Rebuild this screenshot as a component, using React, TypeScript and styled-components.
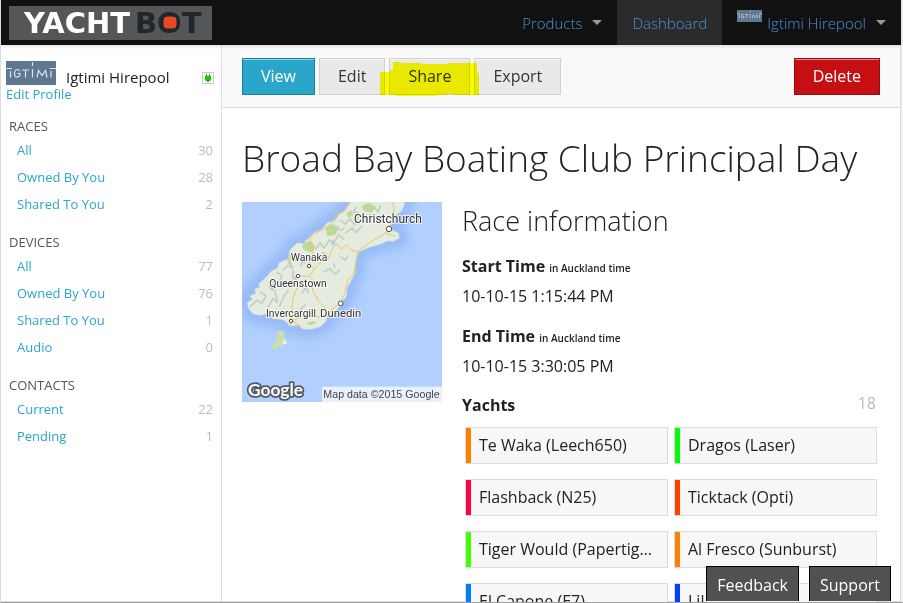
import React from "react";
import styled, { createGlobalStyle } from "styled-components";

const GlobalStyle = createGlobalStyle`
  *, *::before, *::after { box-sizing: border-box; }
  body {
    margin: 0;
    background: #fff;
    color: #222;
    font-family: "Open Sans", "Noto Sans", sans-serif;
    font-size: 16px;
    line-height: 24px;
  }
  h1, h2, h3, p, ul, dl, dd, dt { margin: 0; padding: 0; }
  ul { list-style: none; }
  a { text-decoration: none; }
  button { font-family: inherit; margin: 0; cursor: pointer; }
`;

const Frame = styled.div`
  display: flex;
  flex-direction: column;
  height: 100vh;
  overflow: hidden;
  padding-right: 2px;
  background: #f2f2f2;
  border-left: 1px solid #dcdcdc;
  border-bottom: 1px solid #a0a0a0;
`;

const TopBar = styled.header`
  display: flex;
  flex: none;
  height: 45px;
  align-items: stretch;
  justify-content: space-between;
  background: #111;
  padding-left: 8px;
  box-shadow: 0 1px 4px rgba(0, 0, 0, 0.15);
  z-index: 1;
`;

const Brand = styled.a`
  align-self: center;
  height: 34px;
`;

const Nav = styled.nav`
  display: flex;
`;

const NavItem = styled.a<{ $active?: boolean }>`
  display: flex;
  align-items: center;
  padding: 0 15px;
  color: #4f8fdc;
  font-weight: 300;
  font-size: 15px;
  background: ${(p) => (p.$active ? "#2b2b2b" : "transparent")};
`;

const Caret = styled.span`
  margin-left: 10px;
  border: 5px solid transparent;
  border-top-color: #999;
  border-bottom-width: 0;
`;

const NavLogo = styled.span`
  display: flex;
  align-self: flex-start;
  margin: 10px 5px 0 0;
`;

const Body = styled.div`
  display: flex;
  flex: 1;
  min-height: 0;
  background: #fff;
  border-right: 1px solid #dcdcdc;
  border-bottom: 1px solid #dcdcdc;
`;

const Sidebar = styled.aside`
  flex: none;
  width: 221px;
  padding: 15px 8px 0 8px;
  border-right: 1px solid #dcdcdc;
  font-size: 13px;
`;

const Profile = styled.div`
  margin-left: -3px;
  line-height: 18px;
`;

const ProfileRow = styled.div`
  display: flex;
  align-items: center;
  gap: 10px;
  height: 25px;
`;

const ProfileName = styled.span`
  flex: 1;
  padding-top: 8px;
  font-size: 15px;
`;

const PlugBadge = styled.span`
  display: flex;
  margin: 10px -1px 0 0;
`;

const SideLink = styled.a`
  color: #2ba6cb;
`;

const Group = styled.section`
  padding-bottom: 14px;
`;

const Groups = styled.div`
  padding-top: 13px;
`;

const GroupTitle = styled.h3`
  font-size: 13px;
  font-weight: 400;
  line-height: 21px;
  color: #555;
`;

const GroupRow = styled.li`
  display: flex;
  justify-content: space-between;
  padding-left: 8px;
  line-height: 27px;
`;

const Count = styled.span`
  color: #bbb;
`;

const Main = styled.main`
  flex: 1;
  min-width: 0;
`;

const Toolbar = styled.div`
  display: flex;
  justify-content: space-between;
  padding: 13px 20px 12px;
  background: #f9f9f9;
  border-bottom: 1px solid #dcdcdc;
`;

const ButtonRow = styled.div`
  display: flex;
  gap: 4px;
`;

const tones = {
  primary: { bg: "#2ba6cb", edge: "#1e7f9c", text: "#fff", weight: 500 },
  plain: { bg: "#e9e9e9", edge: "#d0d0d0", text: "#333", weight: 400 },
  danger: { bg: "#c60f13", edge: "#970b0e", text: "#fff", weight: 500 },
};

const ActionButton = styled.button<{ $tone: keyof typeof tones }>`
  position: relative;
  height: 37px;
  padding: 0 18px 2px;
  border: 1px solid ${(p) => tones[p.$tone].edge};
  border-radius: 0;
  background: ${(p) => tones[p.$tone].bg};
  box-shadow: inset 0 1px 0 rgba(255, 255, 255, 0.5);
  color: ${(p) => tones[p.$tone].text};
  font-size: 16px;
  font-weight: ${(p) => tones[p.$tone].weight};
  line-height: 20px;
`;

const Marker = styled.svg`
  position: absolute;
  left: -10px;
  top: 2px;
  z-index: 1;
  mix-blend-mode: multiply;
  pointer-events: none;
`;

const Content = styled.div`
  padding: 22px 20px 0;
`;

const Title = styled.h1`
  font-size: 37px;
  font-weight: 300;
  line-height: 56px;
  white-space: nowrap;
`;

const Columns = styled.div`
  display: flex;
  gap: 20px;
  padding-top: 16px;
`;

const MapBox = styled.div`
  flex: none;
  width: 200px;
  height: 200px;
`;

const Info = styled.section`
  flex: 1;
  min-width: 0;
`;

const InfoTitle = styled.h2`
  font-size: 27px;
  font-weight: 300;
  line-height: 38px;
  padding-bottom: 13px;
`;

const Term = styled.dt`
  font-weight: 700;
  line-height: 26px;
  small { font-size: 10px; font-weight: 600; }
`;

const Value = styled.dd`
  line-height: 26px;
  padding: 2px 0 14px;
`;

const YachtHead = styled.div`
  display: flex;
  justify-content: space-between;
  padding-right: 4px;
`;

const YachtTitle = styled.h3`
  font-size: 16px;
  font-weight: 700;
  line-height: 24px;
`;

const YachtCount = styled.span`
  color: #bbb;
  line-height: 20px;
`;

const YachtGrid = styled.ul`
  display: grid;
  grid-template-columns: repeat(2, minmax(0, 1fr));
  gap: 15px 6px;
  padding: 10px 3px 0;
`;

const Yacht = styled.li<{ $color: string }>`
  height: 37px;
  padding: 0 13px;
  border: 1px solid #dcdcdc;
  background: linear-gradient(to right, ${(p) => p.$color} 5px, #f7f7f7 5px);
  line-height: 34px;
  white-space: nowrap;
  overflow: hidden;
  text-overflow: ellipsis;
`;

const HelpDock = styled.div`
  position: fixed;
  right: 12px;
  bottom: 2px;
  z-index: 2;
  display: flex;
  gap: 10px;
`;

const HelpButton = styled.button`
  height: 35px;
  padding: 2px 10px 0;
  border: 1px solid #000;
  border-bottom: 0;
  background: #505152;
  color: #fff;
  font-size: 16px;
`;

const Wordmark = () => (
  <svg width="203" height="34" viewBox="0 0 203 34" role="img" aria-label="YachtBot">
    <rect width="203" height="34" fill="#555657" />
    <g fontFamily='"DejaVu Sans", sans-serif' fontWeight="700" fontSize="29">
      <text x="15" y="27" fill="#fff">YACHT</text>
      <text x="126" y="27" fill="#20262e">BOT</text>
    </g>
    <rect x="154" y="10" width="14" height="13" rx="4" fill="#e84a25" stroke="#20262e" strokeWidth="1" />
  </svg>
);

const IgtimiLogo = ({ width, height }: { width: number; height: number }) => (
  <svg width={width} height={height} viewBox="0 0 50 24" preserveAspectRatio="none" aria-hidden="true">
    <rect width="50" height="24" fill="#5f7891" />
    <g fill="none" stroke="#dbe2e9" strokeWidth="1.2">
      <path d="M0 7.5H6M4.500 10V16.500M14 10Q13 8.500 11.500 8.500Q8.500 8.500 8.500 12.500T11.500 16Q14 16 14 12.500H11.500" />
      <path d="M16 9H23M19.500 9V16.500M26.500 1V5M26.500 8V16.500M31 16.500L32.500 9.500L36 14.500L39.500 9.500L41 16.500M45 10V16.500M43.500 7.500H50" />
    </g>
  </svg>
);

const PlugIcon = () => (
  <svg width="12" height="12" viewBox="0 0 12 12" aria-hidden="true">
    <rect x=".5" y=".5" width="11" height="11" fill="#fff" stroke="#ccc" />
    <path d="M4 2H5V4H7V2H8V4H9V8L8 9H7V10H5V9H4L3 8V4H4Z" fill="#1fc700" />
  </svg>
);

const coast =
  "M332 6L318 30L300 40L285 62L262 68L245 90L222 98L205 116L190 130L170 130L150 150L145 176L118 188L112 205L94 214L82 228L70 240L56 252L60 262L44 268L48 280L30 288L38 298L22 308L26 326L40 342L62 346L84 340L98 356L126 358L140 366L148 378L176 376L186 386L212 388L240 380L256 366L262 350L280 340L296 322L304 306L318 290L322 262L334 240L345 218L346 180L356 156L386 142L416 134L444 122L460 124L478 114L474 98L458 92L450 78L464 62L468 44L484 34L490 20L494 6Z";

const RaceMap = () => (
  <svg width="200" height="200" viewBox="6 6 600 600" role="img" aria-label="Map of the South Island">
    <defs>
      <filter id="soft" x="-20%" y="-20%" width="140%" height="140%">
        <feGaussianBlur stdDeviation="14" />
      </filter>
      <clipPath id="land"><path d={coast} /></clipPath>
    </defs>
    <rect x="6" y="6" width="600" height="600" fill="#b1d0ff" />
    <path d={coast} fill="none" stroke="#98bcf7" strokeWidth="56" filter="url(#soft)" />
    <path d={coast} fill="#e5ebdf" stroke="#d5e2e8" strokeWidth="2" />
    <g clipPath="url(#land)">
      <path
        d="M30 320L52 300L64 312L78 288L60 274M84 322L98 296L112 306L104 270L88 262L96 240L118 248L126 226L110 216M118 320L132 288L146 270M130 210L144 196L158 206L150 184M166 184L178 160L190 180L182 200M226 150L240 128L252 144L268 120L280 132L296 104L312 118M238 176L250 158L262 166M300 60L316 72L330 56L344 74L358 50L374 62L390 44L402 56M316 100L336 84L348 98L366 78M290 80L302 92L314 84M350 20L340 36L356 40M400 20L414 36L422 16M300 170L316 180L324 166M250 216L270 206L284 222L300 210M180 330L198 312M186 280L198 262L206 280"
        fill="none"
        stroke="#b9c5b9"
        strokeWidth="5"
        strokeLinejoin="round"
        opacity=".75"
      />
      <g fill="#bfd89b">
        <path d="M186 128L214 124L226 142L212 158L190 148Z" />
        <path d="M256 84L276 72L298 82L286 104L262 108Z" />
        <path d="M364 18L386 8L408 20L396 38L372 34Z" />
        <path d="M146 160L154 172L148 196L140 180Z" />
        <path d="M200 370L220 362L230 368L210 376Z" />
        <path d="M318 38L334 30L340 44L326 54Z" />
      </g>
      <path d="M192 172L194 190M206 162L208 180M160 212L158 228L168 238L170 250M96 252V272M278 120V136M282 190L284 204" fill="none" stroke="#9fc3f5" strokeWidth="4" />
    </g>
    <path d="M112 392L132 394L134 416L142 430L124 434L106 448L92 446L104 430L112 410Z" fill="#cbdfa9" />
    <path d="M134 416L142 430L124 434Z" fill="#edf1ea" />
    <g fill="none" stroke="#f3c45b" strokeWidth="3" strokeLinejoin="round">
      <path d="M326 8L312 34L290 44L276 68L250 88L214 106L208 128L222 136L218 168L206 190L222 208L208 230L176 228L158 236L172 262L160 290L154 340L150 378" />
      <path d="M222 208L240 188L264 178L276 148L290 130L304 148L318 134L334 150L352 156L388 128L430 104L446 88L456 56L462 26L458 6" />
      <path d="M446 88L440 102L466 108M352 156L348 190L340 222L322 242L316 276L302 308L268 334L250 352L196 346L156 362M216 232L218 272L236 304L258 328M152 360L184 380" />
    </g>
    <g fill="#fff" stroke="#505050" strokeWidth="3">
      <circle cx="447" cy="87" r="8" />
      <circle cx="207" cy="198" r="5" />
      <circle cx="174" cy="228" r="5" />
      <circle cx="302" cy="310" r="7" />
      <circle cx="153" cy="363" r="5" />
    </g>
    <g fontFamily="Roboto, sans-serif" fill="#333" stroke="#fff" strokeWidth="6" strokeOpacity=".8" strokeLinejoin="round" paintOrder="stroke">
      <text x="342" y="69" fontSize="36">Christchurch</text>
      <text x="152" y="184" fontSize="31">Wanaka</text>
      <text x="88" y="262" fontSize="31">Queenstown</text>
      <text x="78" y="350" fontSize="31">Invercargill</text>
      <text x="240" y="350" fontSize="34">Dunedin</text>
    </g>
    <text x="24" y="588" fontFamily="Lato, sans-serif" fontWeight="700" fontSize="52" fill="#fff" stroke="#555b66" strokeWidth="11" strokeLinejoin="round" paintOrder="stroke">Google</text>
    <rect x="246" y="560" width="360" height="46" fill="#eaf1fc" />
    <text x="250" y="594" fontFamily='"Liberation Sans", sans-serif' fontSize="32" fill="#444">Map data ©2015 Google</text>
  </svg>
);

const groups = [
  { title: "RACES", rows: [["All", 30], ["Owned By You", 28], ["Shared To You", 2]] },
  { title: "DEVICES", rows: [["All", 77], ["Owned By You", 76], ["Shared To You", 1], ["Audio", 0]] },
  { title: "CONTACTS", rows: [["Current", 22], ["Pending", 1]] },
];

const yachts = [
  ["Te Waka (Leech650)", "#ff8000"],
  ["Dragos (Laser)", "#00ff00"],
  ["Flashback (N25)", "#ff0040"],
  ["Ticktack (Opti)", "#ff4000"],
  ["Tiger Would (Papertiger)", "#40ff00"],
  ["Al Fresco (Sunburst)", "#ff8000"],
  ["El Capone (E7)", "#0080ff"],
  ["Lil", "#0040ff"],
];

export default function App() {
  return (
    <>
      <GlobalStyle />
      <Frame>
        <TopBar>
          <Brand href="#home"><Wordmark /></Brand>
          <Nav>
            <NavItem href="#products">Products<Caret /></NavItem>
            <NavItem href="#dashboard" $active>Dashboard</NavItem>
            <NavItem href="#account">
              <NavLogo><IgtimiLogo width={25} height={12} /></NavLogo>
              Igtimi Hirepool
              <Caret />
            </NavItem>
          </Nav>
        </TopBar>
        <Body>
          <Sidebar>
            <Profile>
              <ProfileRow>
                <IgtimiLogo width={50} height={24} />
                <ProfileName>Igtimi Hirepool</ProfileName>
                <PlugBadge><PlugIcon /></PlugBadge>
              </ProfileRow>
              <SideLink href="#profile">Edit Profile</SideLink>
            </Profile>
            <Groups>
              {groups.map((g) => (
                <Group key={g.title}>
                  <GroupTitle>{g.title}</GroupTitle>
                  <ul>
                    {g.rows.map(([label, count]) => (
                      <GroupRow key={label}>
                        <SideLink href={"#" + g.title.toLowerCase()}>{label}</SideLink>
                        <Count>{count}</Count>
                      </GroupRow>
                    ))}
                  </ul>
                </Group>
              ))}
            </Groups>
          </Sidebar>
          <Main>
            <Toolbar>
              <ButtonRow>
                <ActionButton $tone="primary">View</ActionButton>
                <ActionButton $tone="plain">Edit</ActionButton>
                <ActionButton $tone="plain">
                  Share
                  <Marker width="99" height="36" viewBox="0 0 99 36" aria-hidden="true">
                    <path d="M0 11H10V9H13V1H21V2H41V3H68V2H97V12H99V34H74V33H67V34H57V35H16V34H0Z" fill="#ff0" />
                  </Marker>
                </ActionButton>
                <ActionButton $tone="plain">Export</ActionButton>
              </ButtonRow>
              <ActionButton $tone="danger">Delete</ActionButton>
            </Toolbar>
            <Content>
              <Title>Broad Bay Boating Club Principal Day</Title>
              <Columns>
                <MapBox><RaceMap /></MapBox>
                <Info>
                  <InfoTitle>Race information</InfoTitle>
                  <dl>
                    <Term>Start Time <small>in Auckland time</small></Term>
                    <Value>10-10-15 1:15:44 PM</Value>
                    <Term>End Time <small>in Auckland time</small></Term>
                    <Value>10-10-15 3:30:05 PM</Value>
                  </dl>
                  <YachtHead>
                    <YachtTitle>Yachts</YachtTitle>
                    <YachtCount>18</YachtCount>
                  </YachtHead>
                  <YachtGrid>
                    {yachts.map(([name, color]) => (
                      <Yacht key={name} $color={color}>{name}</Yacht>
                    ))}
                  </YachtGrid>
                </Info>
              </Columns>
            </Content>
          </Main>
        </Body>
        <HelpDock>
          <HelpButton>Feedback</HelpButton>
          <HelpButton>Support</HelpButton>
        </HelpDock>
      </Frame>
    </>
  );
}
